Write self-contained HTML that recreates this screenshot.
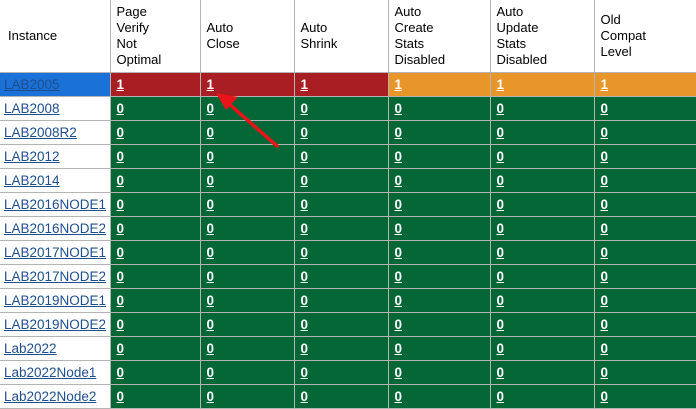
<!DOCTYPE html>
<html><head><style>
body{margin:0;width:696px;height:408px;overflow:hidden;background:#fff;font-family:"Liberation Sans",Arial,sans-serif;font-size:13px;position:relative}
table{border-collapse:collapse;table-layout:fixed;position:absolute;left:0;top:0;width:697px}
td{border:1px solid #b4b4b4;height:23px;padding:0 0 0 4px;vertical-align:middle;line-height:16px;white-space:nowrap;font-size:13.5px}
th{border:1px solid #b4b4b4;height:72px;font-weight:normal;text-align:left;padding:0 0 0 6px;line-height:16px;vertical-align:middle;border-top:none}
td:first-child,th:first-child{border-left:none}
a{color:#1f4e8c;text-decoration:underline}
td.g,td.r,td.o{padding-left:6px;font-weight:bold}
.g{background:#056636}.r{background:#a91e23}.o{background:#e8962a}.b{background:#1a72d8}
.g a,.r a,.o a{color:#fff}
.b a{color:#1f4e8c}
</style></head><body>
<table>
<colgroup><col style="width:110px"><col style="width:90px"><col style="width:94px"><col style="width:94px"><col style="width:102px"><col style="width:104px"><col style="width:103px"></colgroup>
<tr><th style="padding-left:8px">Instance</th><th>Page<br>Verify<br>Not<br>Optimal</th><th>Auto<br>Close</th><th>Auto<br>Shrink</th><th>Auto<br>Create<br>Stats<br>Disabled</th><th>Auto<br>Update<br>Stats<br>Disabled</th><th>Old<br>Compat<br>Level</th></tr>
<tr><td class="b"><a>LAB2005</a></td><td class="r"><a>1</a></td><td class="r"><a>1</a></td><td class="r"><a>1</a></td><td class="o"><a>1</a></td><td class="o"><a>1</a></td><td class="o"><a>1</a></td></tr>
<tr><td><a>LAB2008</a></td><td class="g"><a>0</a></td><td class="g"><a>0</a></td><td class="g"><a>0</a></td><td class="g"><a>0</a></td><td class="g"><a>0</a></td><td class="g"><a>0</a></td></tr>
<tr><td><a>LAB2008R2</a></td><td class="g"><a>0</a></td><td class="g"><a>0</a></td><td class="g"><a>0</a></td><td class="g"><a>0</a></td><td class="g"><a>0</a></td><td class="g"><a>0</a></td></tr>
<tr><td><a>LAB2012</a></td><td class="g"><a>0</a></td><td class="g"><a>0</a></td><td class="g"><a>0</a></td><td class="g"><a>0</a></td><td class="g"><a>0</a></td><td class="g"><a>0</a></td></tr>
<tr><td><a>LAB2014</a></td><td class="g"><a>0</a></td><td class="g"><a>0</a></td><td class="g"><a>0</a></td><td class="g"><a>0</a></td><td class="g"><a>0</a></td><td class="g"><a>0</a></td></tr>
<tr><td><a>LAB2016NODE1</a></td><td class="g"><a>0</a></td><td class="g"><a>0</a></td><td class="g"><a>0</a></td><td class="g"><a>0</a></td><td class="g"><a>0</a></td><td class="g"><a>0</a></td></tr>
<tr><td><a>LAB2016NODE2</a></td><td class="g"><a>0</a></td><td class="g"><a>0</a></td><td class="g"><a>0</a></td><td class="g"><a>0</a></td><td class="g"><a>0</a></td><td class="g"><a>0</a></td></tr>
<tr><td><a>LAB2017NODE1</a></td><td class="g"><a>0</a></td><td class="g"><a>0</a></td><td class="g"><a>0</a></td><td class="g"><a>0</a></td><td class="g"><a>0</a></td><td class="g"><a>0</a></td></tr>
<tr><td><a>LAB2017NODE2</a></td><td class="g"><a>0</a></td><td class="g"><a>0</a></td><td class="g"><a>0</a></td><td class="g"><a>0</a></td><td class="g"><a>0</a></td><td class="g"><a>0</a></td></tr>
<tr><td><a>LAB2019NODE1</a></td><td class="g"><a>0</a></td><td class="g"><a>0</a></td><td class="g"><a>0</a></td><td class="g"><a>0</a></td><td class="g"><a>0</a></td><td class="g"><a>0</a></td></tr>
<tr><td><a>LAB2019NODE2</a></td><td class="g"><a>0</a></td><td class="g"><a>0</a></td><td class="g"><a>0</a></td><td class="g"><a>0</a></td><td class="g"><a>0</a></td><td class="g"><a>0</a></td></tr>
<tr><td><a>Lab2022</a></td><td class="g"><a>0</a></td><td class="g"><a>0</a></td><td class="g"><a>0</a></td><td class="g"><a>0</a></td><td class="g"><a>0</a></td><td class="g"><a>0</a></td></tr>
<tr><td><a>Lab2022Node1</a></td><td class="g"><a>0</a></td><td class="g"><a>0</a></td><td class="g"><a>0</a></td><td class="g"><a>0</a></td><td class="g"><a>0</a></td><td class="g"><a>0</a></td></tr>
<tr><td><a>Lab2022Node2</a></td><td class="g"><a>0</a></td><td class="g"><a>0</a></td><td class="g"><a>0</a></td><td class="g"><a>0</a></td><td class="g"><a>0</a></td><td class="g"><a>0</a></td></tr>
</table>
<svg style="position:absolute;left:0;top:0" width="696" height="408">
<line x1="277" y1="146" x2="228" y2="103" stroke="#e8141a" stroke-width="3.5" stroke-linecap="round"/>
<polygon points="216,93 238,97 226,110" fill="#e8141a"/>
</svg>
</body></html>
